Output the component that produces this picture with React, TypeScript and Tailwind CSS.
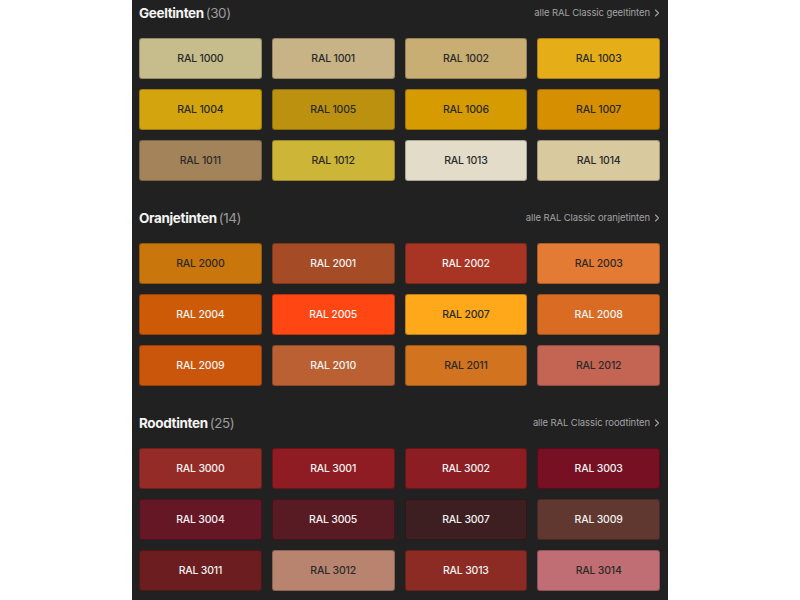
import React from "react";

type Swatch = { code: string; hex: string; dark?: boolean };

type Group = {
  title: string;
  count: number;
  linkLabel: string;
  swatches: Swatch[];
};

const groups: Group[] = [
  {
    title: "Geeltinten",
    count: 30,
    linkLabel: "alle RAL Classic geeltinten",
    swatches: [
      { code: "1000", hex: "#c7bc8b", dark: true },
      { code: "1001", hex: "#c8b386", dark: true },
      { code: "1002", hex: "#c8ae73", dark: true },
      { code: "1003", hex: "#e5ae19", dark: true },
      { code: "1004", hex: "#d4a40f", dark: true },
      { code: "1005", hex: "#bc9110", dark: true },
      { code: "1006", hex: "#d59b00", dark: true },
      { code: "1007", hex: "#d68f00", dark: true },
      { code: "1011", hex: "#a3845a", dark: true },
      { code: "1012", hex: "#cdb637", dark: true },
      { code: "1013", hex: "#e3dcc8", dark: true },
      { code: "1014", hex: "#d8c99e", dark: true },
    ],
  },
  {
    title: "Oranjetinten",
    count: 14,
    linkLabel: "alle RAL Classic oranjetinten",
    swatches: [
      { code: "2000", hex: "#c9760c", dark: true },
      { code: "2001", hex: "#a54b25" },
      { code: "2002", hex: "#a83424" },
      { code: "2003", hex: "#e37b34", dark: true },
      { code: "2004", hex: "#cc5a07" },
      { code: "2005", hex: "#ff4613" },
      { code: "2007", hex: "#ffa91a", dark: true },
      { code: "2008", hex: "#d96b22" },
      { code: "2009", hex: "#c9560b" },
      { code: "2010", hex: "#bb6032" },
      { code: "2011", hex: "#d1731f", dark: true },
      { code: "2012", hex: "#c46554", dark: true },
    ],
  },
  {
    title: "Roodtinten",
    count: 25,
    linkLabel: "alle RAL Classic roodtinten",
    swatches: [
      { code: "3000", hex: "#952b26" },
      { code: "3001", hex: "#8e1c22" },
      { code: "3002", hex: "#8c1d22" },
      { code: "3003", hex: "#761022" },
      { code: "3004", hex: "#651726" },
      { code: "3005", hex: "#591b23" },
      { code: "3007", hex: "#3d1f22" },
      { code: "3009", hex: "#613830" },
      { code: "3011", hex: "#6b1d1f" },
      { code: "3012", hex: "#b8846f", dark: true },
      { code: "3013", hex: "#8c2b24" },
      { code: "3014", hex: "#c06e73", dark: true },
    ],
  },
];

function Chevron() {
  return (
    <svg width="6" height="8" viewBox="0 0 6 8" className="ml-[4px]" fill="none">
      <path d="M1.5 1l3 3-3 3" stroke="currentColor" strokeWidth="1.1" strokeLinecap="round" strokeLinejoin="round" />
    </svg>
  );
}

function SwatchCard({ swatch }: { swatch: Swatch }) {
  return (
    <div
      className={`flex h-[41px] items-center justify-center rounded-[3px] border border-black/25 text-[10.5px] font-medium tracking-[-0.2px] ${
        swatch.dark ? "text-[#2a2a2a]" : "text-[#f2f2f2]"
      }`}
      style={{ backgroundColor: swatch.hex }}
    >
      RAL {swatch.code}
    </div>
  );
}

function ColorGroup({ group }: { group: Group }) {
  return (
    <section className="mb-[24px]">
      <div className="mb-[12px] flex h-[26px] items-center justify-between">
        <h2 className="text-[13.5px] font-bold tracking-[-0.35px] text-[#f4f4f4]">
          {group.title}
          <span className="ml-[2px] font-normal tracking-[-0.5px] text-[#9b9b9b]">({group.count})</span>
        </h2>
        <a className="flex items-center text-[9.5px] tracking-[-0.1px] text-[#a3a3a3]">
          {group.linkLabel}
          <Chevron />
        </a>
      </div>
      <div className="grid grid-cols-4 gap-[10px]">
        {group.swatches.map((s) => (
          <SwatchCard key={s.code} swatch={s} />
        ))}
      </div>
    </section>
  );
}

export default function App() {
  return (
    <div className="h-[600px] w-full overflow-hidden bg-white" style={{ fontFamily: "Inter, 'Noto Sans', sans-serif" }}>
      <div className="mx-auto h-full w-[536px] bg-[#212121] pl-[7px] pr-[8px]">
        {groups.map((g) => (
          <ColorGroup key={g.title} group={g} />
        ))}
      </div>
    </div>
  );
}
